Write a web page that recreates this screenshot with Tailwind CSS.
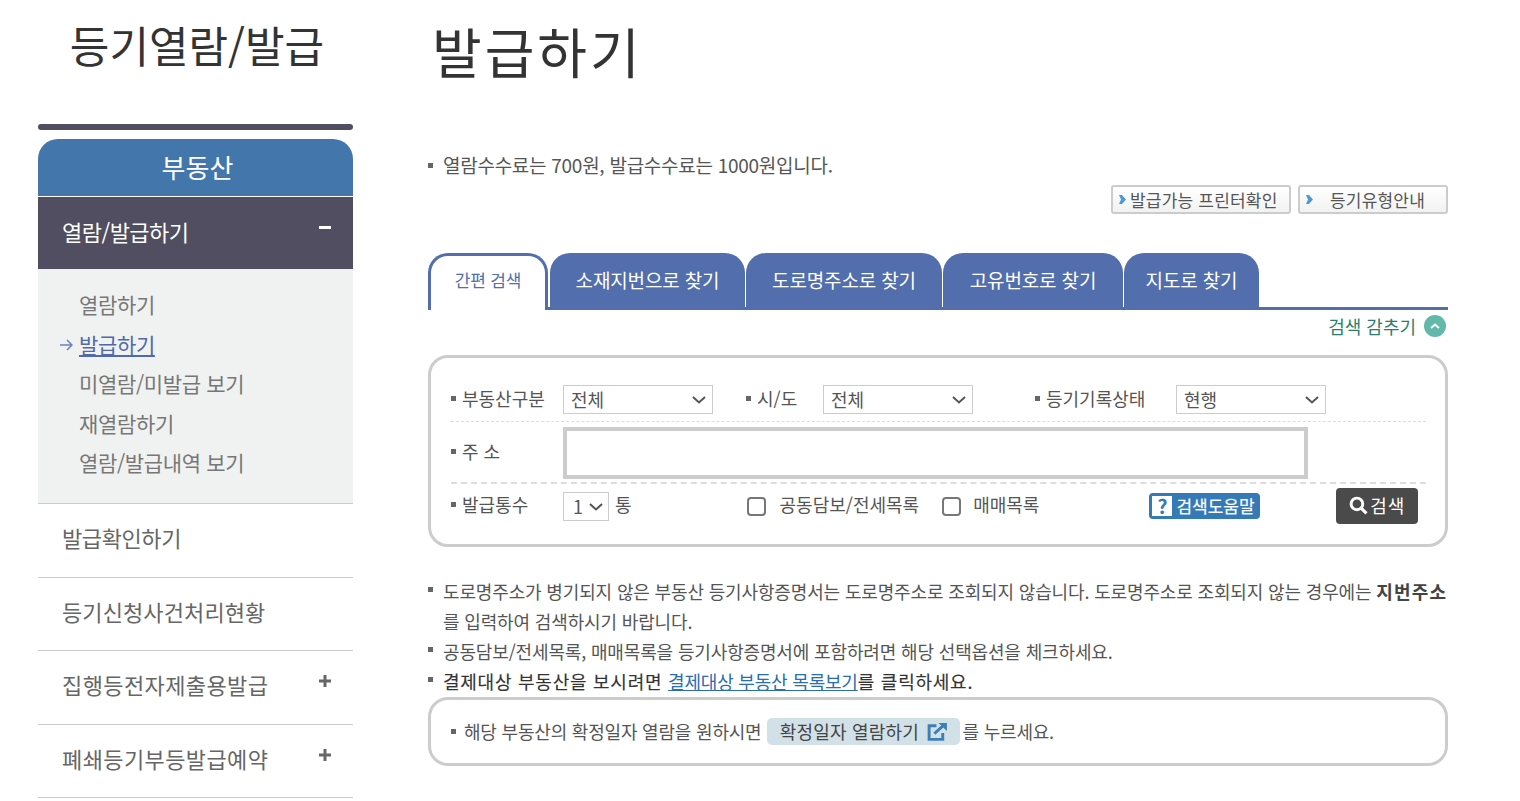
<!DOCTYPE html>
<html lang="ko">
<head>
  <meta charset="UTF-8" />
  <meta name="viewport" content="width=device-width, initial-scale=1" />
  <title>발급하기</title>
  <script src="https://cdn.jsdelivr.net/npm/@tailwindcss/browser@4"></script>
</head>
<body class="bg-white font-['Noto_Sans_CJK_KR','Noto_Sans',sans-serif] text-[#555] overflow-hidden">
  <div class="flex h-[801px] overflow-hidden pl-[38px]">
    <!-- Sidebar -->
    <aside class="w-[315px] shrink-0">
      <h2 class="h-[124px] pt-[13px] pl-[3px] text-center text-[43px] leading-[62px] tracking-[0px] text-[#333]">등기열람/발급</h2>
      <div class="h-[6px] rounded-[3px] bg-[#504e60]"></div>
      <div class="mt-[9px] h-[57px] rounded-t-[20px] bg-[#4377ac] pl-[4px] text-center text-[26px] leading-[56px] text-white">부동산</div>
      <div class="mt-px flex h-[72px] items-start justify-between bg-[#504e60] pl-[24px] pr-[22px] text-white">
        <span class="pt-[18px] text-[22px] leading-[32px] tracking-[-0.5px]">열람/발급하기</span>
        <span class="mt-[29px] h-[3px] w-[12px] bg-white"></span>
      </div>
      <ul class="h-[235px] border-b border-[#ccc] bg-[#f0f2f1] pl-[41px] pt-[16px] text-[21px] leading-[39.5px] tracking-[-0.35px] text-[#777]">
        <li>열람하기</li>
        <li class="relative text-[#5268ad] underline underline-offset-2">
          <svg class="absolute left-[-19px] top-[14px]" width="13" height="12" viewBox="0 0 13 12" fill="none" stroke="#6f7fbd" stroke-width="1.5"><path d="M0 6h12M7 1l5 5-5 5"/></svg>
          발급하기
        </li>
        <li>미열람/미발급 보기</li>
        <li>재열람하기</li>
        <li>열람/발급내역 보기</li>
      </ul>
      <div class="flex h-[74px] items-center border-b border-[#ccc] pl-[24px] pb-[6px] text-[22px] tracking-[-0.4px] text-[#666]">발급확인하기</div>
      <div class="flex h-[73px] items-center border-b border-[#ccc] pl-[24px] pb-[5px] text-[22px] tracking-[0.1px] text-[#666]">등기신청사건처리현황</div>
      <div class="relative flex h-[74px] items-center border-b border-[#ccc] pl-[24px] pb-[6px] text-[22px] tracking-[0.4px] text-[#666]">
        집행등전자제출용발급
        <svg class="absolute right-[22px] top-[24px]" width="12" height="12" viewBox="0 0 12 12" fill="#666"><path d="M4.5 0h3v4.500h4.500v3h-4.500v4.500h-3v-4.500h-4.500v-3h4.500z"/></svg>
      </div>
      <div class="relative flex h-[73px] items-center border-b border-[#ccc] pl-[24px] pb-[5px] text-[22px] tracking-[0.4px] text-[#666]">
        폐쇄등기부등발급예약
        <svg class="absolute right-[22px] top-[24px]" width="12" height="12" viewBox="0 0 12 12" fill="#666"><path d="M4.5 0h3v4.500h4.500v3h-4.500v4.500h-3v-4.500h-4.500v-3h4.500z"/></svg>
      </div>
    </aside>

    <!-- Main -->
    <main class="ml-[75px] w-[1020px] shrink-0">
      <h1 class="h-[150px] pl-[4px] pt-[12px] text-[54px] leading-[78px] tracking-[3px] text-[#333]">발급하기</h1>

      <p class="flex h-[30px] items-center text-[19px] tracking-[-0.27px] text-[#555]">
        <span class="mr-[10px] h-[5px] w-[5px] bg-[#666]"></span>열람수수료는 700원, 발급수수료는 1000원입니다.
      </p>

      <div class="mt-[5px] flex justify-end gap-[7px]">
        <button class="flex h-[29px] w-[180px] items-center rounded-[3px] border-2 border-[#ccc] bg-linear-to-b from-white to-[#f2f2f2] pl-[6px] text-[17px] tracking-[0.2px] text-[#555]">
          <svg class="mr-[4px]" width="7" height="9" viewBox="0 0 7 9" fill="#4a9bd8"><path d="M0 0h3l4 4.500-4 4.500h-3l2-4.500z"/></svg>발급가능 프린터확인
        </button>
        <button class="flex h-[29px] w-[150px] items-center rounded-[3px] border-2 border-[#ccc] bg-linear-to-b from-white to-[#f2f2f2] pl-[6px] text-[17px] tracking-[0.2px] text-[#555]">
          <svg class="mr-[17px]" width="7" height="9" viewBox="0 0 7 9" fill="#4a9bd8"><path d="M0 0h3l4 4.500-4 4.500h-3l2-4.500z"/></svg>등기유형안내
        </button>
      </div>

      <!-- Tabs -->
      <div class="mt-[39px] flex h-[57px] gap-px border-b-[3px] border-[#526eac] text-[19px] tracking-[-0.15px] text-white">
        <div class="mr-px flex h-[57px] w-[120px] items-center justify-center rounded-t-[20px] border-[3px] border-b-0 border-[#526eac] bg-white pb-[6px] text-[17px] text-[#526eac]">간편 검색</div>
        <div class="flex h-[54px] w-[195px] items-center justify-center rounded-t-[20px] bg-[#526eac]">소재지번으로 찾기</div>
        <div class="flex h-[54px] w-[196px] items-center justify-center rounded-t-[20px] bg-[#526eac]">도로명주소로 찾기</div>
        <div class="flex h-[54px] w-[180px] items-center justify-center rounded-t-[20px] bg-[#526eac]">고유번호로 찾기</div>
        <div class="flex h-[54px] w-[135px] items-center justify-center rounded-t-[20px] bg-[#526eac]">지도로 찾기</div>
      </div>

      <div class="flex h-[33px] items-center justify-end pr-[2px] pb-[1px] text-[18px] tracking-[0px] text-[#2b7e6d]">
        검색 감추기
        <span class="ml-[8px] flex h-[22px] w-[22px] items-center justify-center rounded-full bg-[#62b8a9]">
          <svg width="10" height="6" viewBox="0 0 10 6" fill="none" stroke="#fff" stroke-width="2"><path d="M1 5l4-3.500 4 3.500"/></svg>
        </span>
      </div>

      <!-- Search form -->
      <div class="mt-[12px] h-[192px] rounded-[20px] border-[3px] border-[#ccc] pl-[20px] pr-[19px] pt-[27px] text-[18px] text-[#555]">
        <div class="flex h-[37px] border-b border-dashed border-[#ddd] pb-[7px]">
          <label class="flex w-[112px] items-center pb-[2px]"><span class="mr-[6px] h-[5px] w-[5px] bg-[#666]"></span>부동산구분</label>
          <div class="relative h-[29px] w-[150px]">
            <select class="h-full w-full appearance-none border border-[#ccc] bg-white pb-[2px] pl-[7px]"><option>전체</option></select>
            <svg class="pointer-events-none absolute right-[7px] top-[11px]" width="14" height="8" viewBox="0 0 14 8" fill="none" stroke="#555" stroke-width="2"><path d="M1 1l6 5.500 6-5.500"/></svg>
          </div>
          <label class="ml-[33px] flex w-[77px] items-center pb-[2px]"><span class="mr-[6px] h-[5px] w-[5px] bg-[#666]"></span>시/도</label>
          <div class="relative h-[29px] w-[150px]">
            <select class="h-full w-full appearance-none border border-[#ccc] bg-white pb-[2px] pl-[7px]"><option>전체</option></select>
            <svg class="pointer-events-none absolute right-[7px] top-[11px]" width="14" height="8" viewBox="0 0 14 8" fill="none" stroke="#555" stroke-width="2"><path d="M1 1l6 5.500 6-5.500"/></svg>
          </div>
          <label class="ml-[62px] flex w-[141px] items-center pb-[2px]"><span class="mr-[6px] h-[5px] w-[5px] bg-[#666]"></span>등기기록상태</label>
          <div class="relative h-[29px] w-[150px]">
            <select class="h-full w-full appearance-none border border-[#ccc] bg-white pb-[2px] pl-[7px]"><option>현행</option></select>
            <svg class="pointer-events-none absolute right-[7px] top-[11px]" width="14" height="8" viewBox="0 0 14 8" fill="none" stroke="#555" stroke-width="2"><path d="M1 1l6 5.500 6-5.500"/></svg>
          </div>
        </div>
        <div class="flex h-[62px] items-center border-b-2 border-dashed border-[#ddd] pt-[2px]">
          <label class="flex w-[112px] items-center pb-[4px]"><span class="mr-[6px] h-[5px] w-[5px] bg-[#666]"></span>주 소</label>
          <input type="text" class="h-[52px] w-[745px] border-[4px] border-[#ccc] bg-white" />
        </div>
        <div class="flex items-center pt-[4px]">
          <label class="flex w-[112px] items-center pb-[4px]"><span class="mr-[6px] h-[5px] w-[5px] bg-[#666]"></span>발급통수</label>
          <div class="relative h-[29px] w-[46px]">
            <select class="h-full w-full appearance-none border border-[#ccc] bg-white pb-[2px] pl-[9px]"><option>1</option></select>
            <svg class="pointer-events-none absolute right-[6px] top-[11px]" width="14" height="8" viewBox="0 0 14 8" fill="none" stroke="#555" stroke-width="2"><path d="M1 1l6 5.500 6-5.500"/></svg>
          </div>
          <span class="ml-[6px] pb-[4px]">통</span>
          <input type="checkbox" class="ml-[115px] h-[19px] w-[19px] appearance-none rounded-[4px] border-2 border-[#777] bg-white" />
          <span class="ml-[14px] pb-[4px]">공동담보/전세목록</span>
          <input type="checkbox" class="ml-[23px] h-[19px] w-[19px] appearance-none rounded-[4px] border-2 border-[#777] bg-white" />
          <span class="ml-[12px] pb-[4px]">매매목록</span>
          <span class="ml-[110px] flex h-[26px] w-[111px] items-center rounded-[4px] bg-[#337ab7] pl-[3px] pb-px text-[17px] text-white [-webkit-text-stroke:0.2px_#fff]">
            <span class="mr-[4px] flex h-[20px] w-[20px] items-center justify-center bg-white text-[20px] font-bold leading-none text-[#337ab7] [-webkit-text-stroke:0]">?</span>검색도움말
          </span>
          <button class="ml-[76px] flex h-[36px] w-[82px] items-center justify-center rounded-[4px] bg-[#4a4a4a] pb-px text-[18px] tracking-[1px] text-white">
            <svg class="mr-[2px]" width="19" height="19" viewBox="0 0 18 18" fill="none" stroke="#fff"><circle cx="7.500" cy="7.500" r="5.500" stroke-width="2.800"/><path d="M11.500 11.500l5 5" stroke-width="3"/></svg>검색
          </button>
        </div>
      </div>

      <!-- Notes -->
      <ul class="mt-[29px] text-[18px] leading-[30px] tracking-[-0.15px] text-[#555]">
        <li class="relative pl-[15px]"><span class="absolute left-0 top-[11px] h-[5px] w-[5px] bg-[#666]"></span>도로명주소가 병기되지 않은 부동산 등기사항증명서는 도로명주소로 조회되지 않습니다. 도로명주소로 조회되지 않는 경우에는 <b class="font-bold tracking-[1.2px] text-[#444]">지번주소</b><br />를 입력하여 검색하시기 바랍니다.</li>
        <li class="relative pl-[15px]"><span class="absolute left-0 top-[11px] h-[5px] w-[5px] bg-[#666]"></span>공동담보/전세목록, 매매목록을 등기사항증명서에 포함하려면 해당 선택옵션을 체크하세요.</li>
        <li class="relative pl-[15px] tracking-[0.75px] text-[#333] [-webkit-text-stroke:0.15px_#333]"><span class="absolute left-0 top-[11px] h-[5px] w-[5px] bg-[#666]"></span>결제대상 부동산을 보시려면 <a class="tracking-[-0.2px] text-[#2a6db0] underline [-webkit-text-stroke:0]">결제대상 부동산 목록보기</a>를 클릭하세요.</li>
      </ul>

      <div class="mt-[1px] flex h-[69px] items-center rounded-[20px] border-[3px] border-[#ccc] pl-[20px] text-[18px] tracking-[-0.2px] text-[#555]">
        <span class="mr-[8px] h-[5px] w-[5px] bg-[#666]"></span>해당 부동산의 확정일자 열람을 원하시면
        <span class="ml-[6px] mr-[2px] flex h-[27px] w-[193px] items-center justify-center rounded-[5px] bg-[#d2e1e8] tracking-[0.2px] text-[#444]">
          확정일자 열람하기
          <svg class="ml-[8px]" width="21" height="19" viewBox="0 0 20 18" fill="none" stroke="#3f7fb5" stroke-width="2.800"><path d="M9 3.500H2v13h13v-6"/><path d="M7 11l9-8"/><path d="M11 1h8v7.500z" fill="#3f7fb5" stroke="none"/></svg>
        </span>
        를 누르세요.
      </div>
    </main>
  </div>
</body>
</html>
